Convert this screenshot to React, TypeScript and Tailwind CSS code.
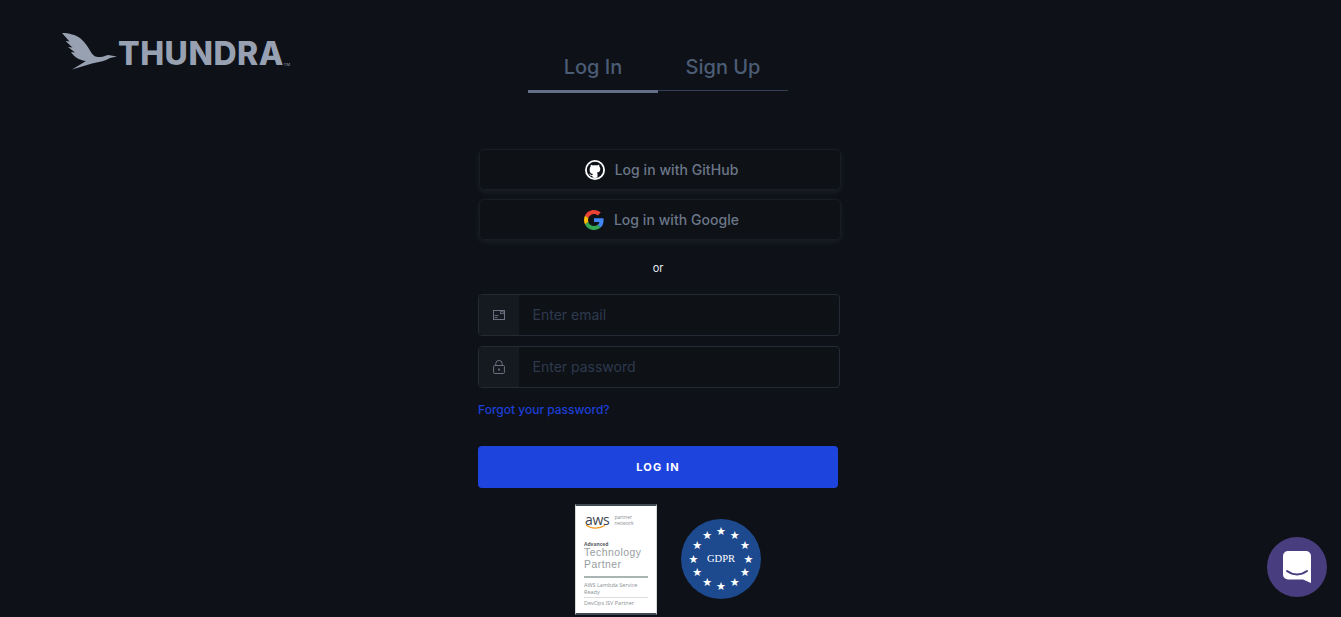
import React from 'react';

const GithubIcon = () => (
  <svg width="20" height="20" viewBox="0 0 20 20" aria-hidden="true">
    <circle cx="10" cy="10" r="10" fill="#ffffff" />
    <circle cx="10" cy="10" r="8.2" fill="#0e1117" />
    <path
      d="M4.7 8.9c0-1 .4-1.8 1-2.4-.1-.5-.1-1.2.2-1.8.8 0 1.5.4 2 .8.7-.2 1.4-.3 2.1-.3s1.400.1 2.100.3c.5-.4 1.200-.8 2-.8.3.6.3 1.300.2 1.800.6.600 1 1.400 1 2.400 0 2.500-1.500 3.400-3.400 3.700.4.400.6.900.6 1.500v3.500c-1.600.5-3.400.5-5 0v-1.600c-1.600.3-2.300-.5-2.700-1.300-.2-.400-.5-.700-.9-.900.8-.2 1.400.3 1.800.9.400.5 1 .7 1.800.4 0-.5.2-.9.500-1.200-1.800-.3-3.300-1.200-3.300-3.500z"
      fill="#ffffff"
    />
  </svg>
);

const GoogleIcon = () => (
  <svg width="20" height="20" viewBox="0 0 48 48" aria-hidden="true">
    <path fill="#EA4335" d="M24 9.500c3.540 0 6.710 1.220 9.210 3.600l6.850-6.850C35.900 2.380 30.470 0 24 0 14.620 0 6.510 5.380 2.560 13.220l7.980 6.190C12.430 13.720 17.740 9.500 24 9.500z" />
    <path fill="#4285F4" d="M46.980 24.550c0-1.570-.15-3.090-.38-4.550H24v9.020h12.940c-.58 2.960-2.260 5.480-4.780 7.180l7.730 6c4.510-4.180 7.090-10.360 7.090-17.650z" />
    <path fill="#FBBC05" d="M10.530 28.590c-.48-1.450-.76-2.990-.76-4.590s.27-3.140.76-4.590l-7.980-6.190C.92 16.460 0 20.120 0 24c0 3.880.92 7.540 2.560 10.780l7.970-6.190z" />
    <path fill="#34A853" d="M24 48c6.480 0 11.930-2.130 15.890-5.810l-7.730-6c-2.150 1.450-4.920 2.300-8.160 2.300-6.260 0-11.570-4.220-13.470-9.910l-7.980 6.190C6.510 42.620 14.620 48 24 48z" />
  </svg>
);

const MailIcon = () => (
  <svg width="12" height="10" viewBox="0 0 12 10" fill="none" stroke="#6b7280" aria-hidden="true">
    <rect x="0.5" y="0.500" width="11" height="9" />
    <rect x="7.500" y="1.700" width="2.800" height="2" strokeWidth="0.800" />
    <path d="M1.500 5.500h4M1.500 7.500h3" strokeWidth="0.900" />
  </svg>
);

const LockIcon = () => (
  <svg width="12" height="14" viewBox="0 0 12 14" fill="none" stroke="#6b7280" aria-hidden="true">
    <rect x="0.600" y="5.500" width="10.800" height="8" rx="1" />
    <path d="M2.800 5.500V3.400a3.200 2.900 0 0 1 6.400 0v2.100" />
    <rect x="5.200" y="8.500" width="1.600" height="2.200" fill="#6b7280" stroke="none" />
  </svg>
);

const BirdLogo = () => (
  <svg width="56" height="38" viewBox="0 0 56 38" fill="#97a1b1" aria-hidden="true">
    <path d="M0 1C7 1 14 3 18 6c5 4 8 9 10 12.500 2 3.500 4 6.500 8 6.500 3 0 6-.5 8-1.500 2-1 4-.5 5 0l6 1-7 1.500c-4 2.500-10 4-18 5.500L10 37.500l14-8.500c-6-.5-12-4-15-9l4 .5-7-5.500 4.500.5L3.500 9l4 .5z" />
  </svg>
);

const AwsBadge = () => (
  <div className="flex h-[111px] w-[82px] flex-col border-y-2 border-x border-y-[#3f4a55] border-x-[#d8d8d8] bg-white px-[8px] pt-[7px] font-['Open_Sans',sans-serif] text-[#8a8f94]">
    <div className="flex items-start gap-[5px] pl-[1px]">
      <div className="relative text-[14px] leading-[13px] tracking-[-0.3px] text-[#3a4450]">
        aws
        <svg className="absolute left-0 top-[11px]" width="22" height="6" viewBox="0 0 22 6" fill="none" aria-hidden="true">
          <path d="M1 1c5 4 13 4 19 .5" stroke="#f29a1f" strokeWidth="1.300" />
        </svg>
      </div>
      <div className="pt-[1px] text-[5px] leading-[6px]">partner<br />network</div>
    </div>
    <div className="mt-[15px] text-[5px] font-bold leading-[6px] text-[#5a6066]">Advanced</div>
    <div className="font-['Liberation_Sans',sans-serif] text-[10.400px] leading-[12px] tracking-[0.5px] text-[#989da2]">Technology<br />Partner</div>
    <div className="mt-[5px] h-[2px] bg-[#a9b5b3]" />
    <div className="mt-[4px] text-[5.500px] leading-[7px]">AWS Lambda Service<br />Ready</div>
    <div className="mt-[1px] h-[1px] bg-[#dddddd]" />
    <div className="mt-[2px] text-[5.500px] leading-[7px]">DevOps ISV Partner</div>
  </div>
);

const GdprBadge = () => {
  const stars = Array.from({ length: 12 }, (_, i) => {
    const a = (i * Math.PI) / 6;
    return { x: 40 + 27.5 * Math.sin(a), y: 40 - 27.5 * Math.cos(a) };
  });
  return (
    <div className="relative mb-[2px] flex h-[80px] w-[80px] items-center justify-center rounded-full bg-[#1d4a8f]">
      {stars.map((s, i) => (
        <span
          key={i}
          className="absolute -translate-x-1/2 -translate-y-1/2 font-['DejaVu_Sans',sans-serif] text-[11px] leading-none text-white"
          style={{ left: s.x, top: s.y }}
        >
          ★
        </span>
      ))}
      <span className="font-['Liberation_Serif',serif] text-[10.500px] text-white">GDPR</span>
    </div>
  );
};

const SocialButton = ({ icon, label }: { icon: React.ReactNode; label: string }) => (
  <button className="flex h-[41px] w-[362px] items-center justify-center gap-[10px] rounded-[5px] border border-[#181c23] bg-[#0e1116] pl-[3px] text-[14px] font-medium tracking-[0.05px] text-[#6b7789] shadow-[0_2px_6px_rgba(148,163,184,0.10)]">
    {icon}
    <span>{label}</span>
  </button>
);

const InputRow = ({ icon, placeholder }: { icon: React.ReactNode; placeholder: string }) => (
  <div className="flex h-[42px] w-[362px] overflow-hidden rounded-[4px] border border-[#242a33] bg-[#0e1116]">
    <div className="flex w-[40px] items-center justify-center bg-[#151a21]">{icon}</div>
    <div className="flex flex-1 items-center pb-[1px] pl-[13.500px] text-[14px] text-[#2d3a4e]">{placeholder}</div>
  </div>
);

export default function App() {
  return (
    <div className="relative flex h-[617px] overflow-hidden bg-[#0e1117] font-['Inter',sans-serif]">
      <div className="w-[478px] pl-[62px] pt-[32px]">
        <div className="flex items-start">
          <BirdLogo />
          <span className="mt-[4px] text-[32px] font-extrabold leading-[36px] tracking-[0.5px] text-[#97a1b1]">
            THUNDRA
          </span>
          <span className="mt-[31px] text-[4px] leading-none text-[#97a1b1]">TM</span>
        </div>
      </div>

      <div className="flex w-[362px] flex-col items-start">
        <div className="ml-[50px] mt-[50px] flex w-[260px]">
          <div className="h-[43px] w-[130px] border-b-[3px] border-[#64708a] pt-[4px] text-center text-[20px] font-medium leading-[26px] text-[#4b5c75]">
            Log In
          </div>
          <div className="h-[41px] w-[130px] border-b border-[#334155] pt-[4px] text-center text-[20px] font-medium leading-[26px] text-[#4b5c75]">
            Sign Up
          </div>
        </div>

        <div className="ml-[1px] mt-[56px] flex flex-col gap-[9px]">
          <SocialButton icon={<GithubIcon />} label="Log in with GitHub" />
          <SocialButton icon={<GoogleIcon />} label="Log in with Google" />
        </div>

        <div className="mt-[21px] w-[360px] text-center text-[11px] leading-[14px] text-[#e2e8f0]">or</div>

        <div className="mt-[19px] flex flex-col gap-[10px]">
          <InputRow icon={<MailIcon />} placeholder="Enter email" />
          <InputRow icon={<LockIcon />} placeholder="Enter password" />
        </div>

        <a className="mt-[15px] text-[12px] font-medium leading-[14px] text-[#1d3fd8]">Forgot your password?</a>

        <button className="mt-[29px] h-[42px] w-[360px] rounded-[4px] bg-[#1e44de] text-[11px] font-bold tracking-[1.100px] text-white">
          LOG IN
        </button>

        <div className="ml-[97px] mt-[16px] flex items-center gap-[24px]">
          <AwsBadge />
          <GdprBadge />
        </div>
      </div>

      <div className="absolute left-[1267px] top-[537px] flex h-[60px] w-[60px] items-center justify-center rounded-full bg-[#483d7e]">
        <svg width="28" height="32" viewBox="0 0 28 32" aria-hidden="true">
          <path d="M5 0h18a5 5 0 0 1 5 5v27l-8-3.500H5a5 5 0 0 1-5-5V5a5 5 0 0 1 5-5z" fill="#ffffff" />
          <path d="M4 20c6 4.500 14 4.500 20 0" fill="none" stroke="#483d7e" strokeWidth="2" strokeLinecap="round" />
        </svg>
      </div>
    </div>
  );
}
